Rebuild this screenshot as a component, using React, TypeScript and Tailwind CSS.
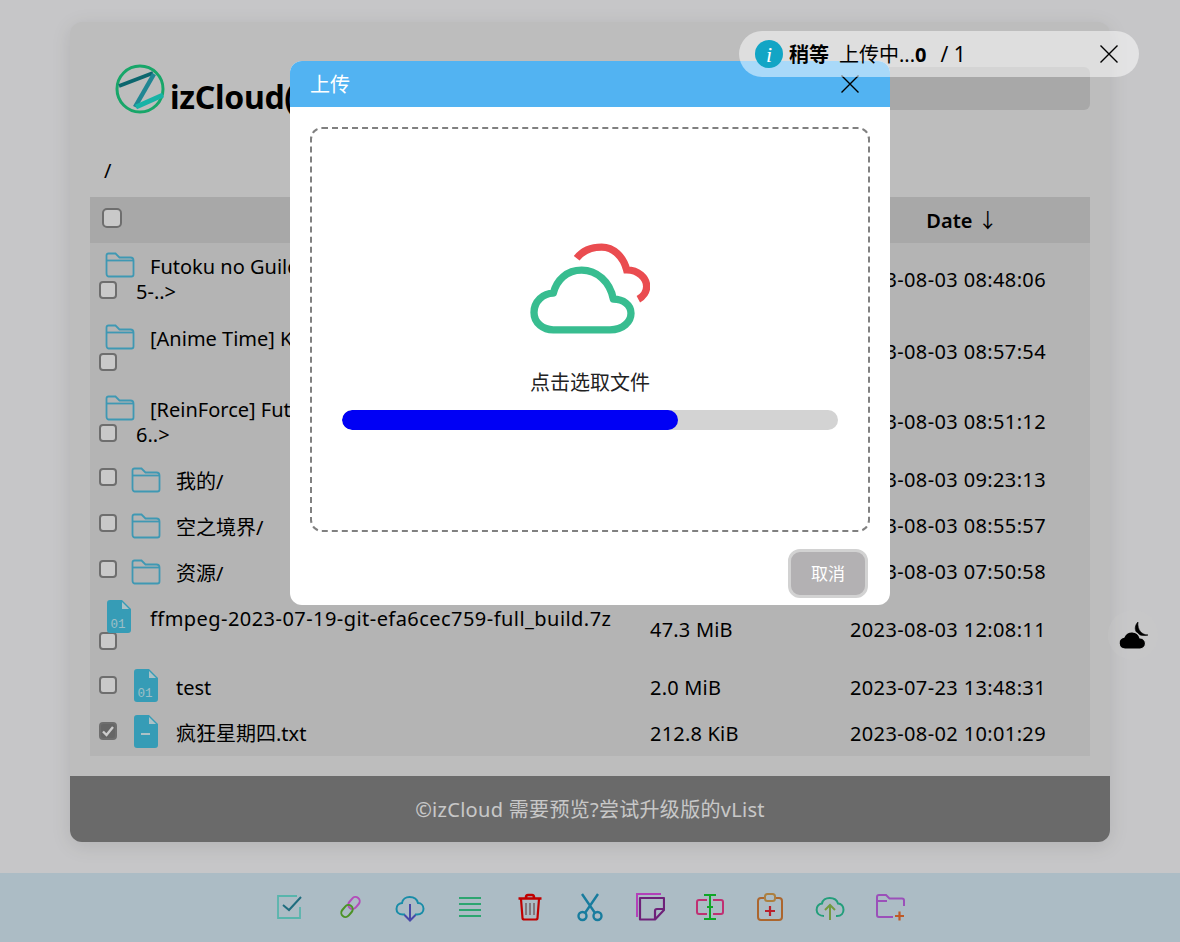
const font = "font-['Noto_Sans','Noto_Sans_CJK_SC',sans-serif]";

function Check({ big, checked, className = "" }: { big?: boolean; checked?: boolean; className?: string }) {
  return (
    <span
      className={`flex shrink-0 items-center justify-center border-2 ${big ? "h-[20px] w-[20px] rounded-[5px]" : "h-[18px] w-[18px] rounded-[4px]"} ${
        checked ? "border-[#8a8a8a] bg-[#808080]" : "border-[#8a8a8a] bg-[#fcfcfc]"
      } ${className}`}
    >
      {checked && (
        <svg width="14" height="14" viewBox="0 0 14 14" fill="none">
          <path d="M2 7.5 5.5 11 12 3" stroke="#fff" strokeWidth="2.4" />
        </svg>
      )}
    </span>
  );
}

function Folder() {
  return (
    <svg width="30" height="26" viewBox="0 0 30 26" fill="none" stroke="#4fbfe0" strokeWidth="1.8" className="shrink-0">
      <path d="M1.5 21V3.5q0-2 2-2h7l4 4h11q3 0 3 3v14q0 2-2 2h-23q-2 0-2-3.500Z" />
      <path d="M1.500 8.500h27" />
    </svg>
  );
}

function FileIcon({ kind, className = "" }: { kind: "bin" | "txt"; className?: string }) {
  return (
    <svg width="24" height="33" viewBox="0 0 24 33" className={`shrink-0 ${className}`}>
      <path d="M3 0h12l9 9v21q0 3-3 3H3q-3 0-3-3V3q0-3 3-3Z" fill="#44c4e4" />
      <path d="M15 2l7 7h-7Z" fill="#d8f2f8" />
      {kind === "bin" ? (
        <text x="3.500" y="27.500" fontSize="12.500" fontFamily="Liberation Mono" fill="#c4eef8">
          01
        </text>
      ) : (
        <path d="M7 19h9" stroke="#d8f2f8" strokeWidth="2" />
      )}
    </svg>
  );
}

const rows = [
  { kind: "tall", name: "Futoku no Guild [01-1", rest: "5-..>", date: "2023-08-03 08:48:06", cls: "h-[72px] pt-[9px]" },
  { kind: "tall", name: "[Anime Time] Kanojo", rest: "", date: "2023-08-03 08:57:54", cls: "h-[72px] pt-[9px]" },
  { kind: "tall", name: "[ReinForce] Futoku", rest: "6..>", date: "2023-08-03 08:51:12", cls: "h-[70px] pt-[8px]" },
  { kind: "dir", name: "我的/", date: "2023-08-03 09:23:13" },
  { kind: "dir", name: "空之境界/", date: "2023-08-03 08:55:57" },
  { kind: "dir", name: "资源/", date: "2023-08-03 07:50:58" },
];

function Toolbar() {
  return (
    <div className="mt-[31px] flex h-[69px] items-center justify-center gap-[30px] bg-[#d8ecf7] pb-[1px]">
      {/* select */}
      <svg width="30" height="30" viewBox="0 0 30 30" fill="none">
        <path d="M25 15v11H3V4h19" stroke="#6fe3d8" strokeWidth="1.8" />
        <path d="M8 13l6 5 12-13" stroke="#27899f" strokeWidth="2" />
      </svg>
      {/* link */}
      <svg width="30" height="30" viewBox="0 0 30 30" fill="none" strokeWidth="2">
        <rect x="14.750" y="4.500" width="8.500" height="13" rx="4.250" transform="rotate(40 19 11)" stroke="#e060e8" />
        <rect x="7.750" y="12.500" width="8.500" height="13" rx="4.250" transform="rotate(40 12 19)" stroke="#60b830" />
      </svg>
      {/* download */}
      <svg width="30" height="30" viewBox="0 0 30 30" fill="none" strokeWidth="2">
        <path d="M8 22.500c-9 0-8-11-1-11.500C8 3 21 3 23 11c7 0 8 11.500-1 11.500h-2M8 22.500h2" stroke="#1fb0d2" />
        <path d="M15 12v16M9.500 23l5.500 5.500 5.500-5.500" stroke="#5a5ad2" />
      </svg>
      {/* list */}
      <svg width="30" height="30" viewBox="0 0 30 30" fill="none" stroke="#39cf8c" strokeWidth="1.9">
        <path d="M4 6h22M4 12h22M4 18h22M4 24h22" />
      </svg>
      {/* delete */}
      <svg width="30" height="30" viewBox="0 0 30 30" fill="none">
        <path d="M3.500 6.500h23M11 5.500q0-2.500 2-2.500h4q2 0 2 2.500" stroke="#f00000" strokeWidth="2.600" />
        <path d="M6 7l1.500 19q0 1.500 2 1.500h11q2 0 2-1.500L24 7" stroke="#f00000" strokeWidth="2.200" />
        <path d="M11 11v12M15 11v12M19 11v12" stroke="#a08a90" strokeWidth="1.800" />
      </svg>
      {/* cut */}
      <svg width="30" height="30" viewBox="0 0 30 30" fill="none" stroke="#1f9cc6" strokeWidth="2.400">
        <circle cx="7.500" cy="24" r="4" />
        <circle cx="22.500" cy="24" r="4" />
        <path d="M10 21 23 2M20 21 7 2" />
      </svg>
      {/* copy */}
      <svg width="30" height="30" viewBox="0 0 30 30" fill="none">
        <path d="M2 25V2h24" stroke="#e050e8" strokeWidth="2" />
        <path d="M5 27.500V6h24v12l-9 9.500Z" stroke="#8a2a98" strokeWidth="2.200" strokeLinejoin="round" />
        <path d="M29 17h-7q-2 0-2 2v8.500" stroke="#8a2a98" strokeWidth="2.200" />
      </svg>
      {/* rename */}
      <svg width="30" height="30" viewBox="0 0 30 30" fill="none">
        <path d="M12 8H4q-2 0-2 2v10q0 2 2 2h8M18 8h8q2 0 2 2v10q0 2-2 2h-8" stroke="#f03c90" strokeWidth="2" />
        <path d="M9 3h12M9 27h12M15 3v24M12 15h6" stroke="#12d030" strokeWidth="2" />
      </svg>
      {/* paste */}
      <svg width="30" height="30" viewBox="0 0 30 30" fill="none">
        <path d="M9 6H6q-3 0-3 3v16q0 3 3 3h18q3 0 3-3V9q0-3-3-3h-3" stroke="#d8803a" strokeWidth="2" />
        <rect x="10" y="2" width="10" height="7" rx="2.500" stroke="#d8a050" strokeWidth="2" />
        <path d="M10 19h10M15 14v10" stroke="#e82838" strokeWidth="2.200" />
      </svg>
      {/* upload */}
      <svg width="30" height="30" viewBox="0 0 30 30" fill="none" strokeWidth="2">
        <path d="M9 24c-10 0-9-12-2-12.500C8 4 21 4 23 11.500c7 0 8 12.500-1 12.500h-1" stroke="#2cc69a" />
        <path d="M15 28V13M10 18l5-5 5 5" stroke="#90c050" />
      </svg>
      {/* new folder */}
      <svg width="30" height="30" viewBox="0 0 30 30" fill="none">
        <path d="M18 25H4q-2 0-2-2V5q0-2 2-2h7l3.500 3.500H27q2 0 2 2V14M2 9h10" stroke="#c264e8" strokeWidth="2" />
        <path d="M20 24h9M24.500 19.500v9" stroke="#ee7030" strokeWidth="2.200" />
      </svg>
    </div>
  );
}

function Upload() {
  return (
    <div className="absolute left-[290px] top-[61px] z-20 h-[544px] w-[600px] overflow-hidden rounded-xl bg-white">
      <div className="flex h-[46px] items-center justify-between bg-[#52b3f2] pl-[20px] pr-[30px] text-[20px] text-white">
        <span className="pt-[1px]">上传</span>
        <svg width="20" height="20" viewBox="0 0 20 20" stroke="#000" strokeWidth="1.400">
          <path d="M1.500 1.500l17 17M18.500 1.500l-17 17" />
        </svg>
      </div>
      <div className="px-[20px] pt-[20px]">
        <div className="flex h-[405px] flex-col items-center rounded-xl border-2 border-dashed border-[#808080] px-[30px] pt-[114px]">
          <svg width="120" height="92" viewBox="60 40 360 275" fill="none">
            <path d="M200 85C220 60 250 52 275 52C310 52 340 80 350 120C385 120 410 145 410 170C410 185 400 200 385 208" stroke="#ea4c50" strokeWidth="22" />
            <path d="M130 300H300C340 300 363 275 363 250C363 225 340 208 310 208C300 155 260 121 215 121C170 121 140 150 130 190C100 190 72 215 72 248C72 280 100 300 130 300Z" stroke="#38bd90" strokeWidth="22" strokeLinejoin="round" />
          </svg>
          <div className="mt-[34px] text-[20px] leading-[28px] text-[#222]">点击选取文件</div>
          <div className="mt-[13px] h-[20px] w-full overflow-hidden rounded-full bg-[#d3d3d3]">
            <div className="h-full w-[336px] rounded-full bg-[#0000f5]" />
          </div>
        </div>
        <div className="mt-[17px] flex justify-end pr-[2px]">
          <button className="flex h-[49px] w-[80px] items-center justify-center rounded-xl border-[3px] border-[#d2d2d2] bg-[#b3b1b3] text-[17px] text-white">
            取消
          </button>
        </div>
      </div>
    </div>
  );
}

export default function App() {
  return (
    <div className={`relative h-[942px] w-[1180px] overflow-hidden bg-[#f8f8fa] text-black ${font}`}>
      {/* page */}
      <div className="mx-[70px] mt-[22px] flex h-[820px] flex-col overflow-hidden rounded-xl bg-[#ededed] shadow-[0_4px_20px_rgba(0,0,0,0.1)]">
        <div className="flex h-[175px] flex-col px-[20px]">
          <div className="mt-[45px] flex h-[43px] items-center justify-between">
            <div className="ml-[25px] flex items-center gap-[5px] whitespace-nowrap text-[32px] font-bold">
              <svg width="50" height="50" viewBox="0 0 50 50" fill="none" className="shrink-0">
                <circle cx="25" cy="25" r="23" stroke="#1ed084" strokeWidth="3" />
                <path d="M4 22 38 9" stroke="#10808a" strokeWidth="4" />
                <path d="M39 10 20 43" stroke="#28a8b8" strokeWidth="4.500" />
                <path d="M21 43 48 31" stroke="#1fe0d0" strokeWidth="5" />
              </svg>
              <span className="pt-[16px] leading-[32px] tracking-[-0.3px]">izCloud(</span>
            </div>
            <div className="h-[43px] w-[500px] rounded-md bg-[#d3d3d3]" />
          </div>
          <div className="ml-[14px] mt-[47px] text-[20px] leading-[28px]">/</div>
        </div>
        <div className="mx-[20px] bg-[#e2e2e2] text-[20px]">
          <div className="flex h-[46px] items-center bg-[#d3d3d3] pl-[12px]">
            <div className="w-[548px]">
              <Check big className="mb-[4px]" />
            </div>
            <div className="w-[200px]" />
            <div className="w-[240px] pr-[16px] pt-[2px] text-center font-semibold">
              Date <span className="font-normal">↓</span>
            </div>
          </div>
          {rows.map((r) =>
            r.kind === "tall" ? (
              <div key={r.name} className={`flex ${r.cls}`}>
                <div className="w-[560px]">
                  <div className="flex h-[26px] items-center gap-[15px] pl-[15px] whitespace-nowrap">
                    <Folder />
                    <span className="pt-[4px]">{r.name}</span>
                  </div>
                  <div className="flex h-[26px] items-center gap-[19px] pl-[9px]">
                    <Check className="mb-[2px]" />
                    <span className="pt-[2px]">{r.rest}</span>
                  </div>
                </div>
                <div className="w-[200px]" />
                <div className="flex items-center self-stretch pb-[8px] tracking-[0.37px] whitespace-nowrap">{r.date}</div>
              </div>
            ) : (
              <div key={r.name} className="flex h-[46px] items-center">
                <div className="flex w-[560px] items-center gap-[14px] pl-[9px]">
                  <Check className="mb-[6px]" />
                  <Folder />
                  <span className="ml-[1px] pt-[3px]">{r.name}</span>
                </div>
                <div className="w-[200px]" />
                <div className="tracking-[0.37px] whitespace-nowrap">{r.date}</div>
              </div>
            ),
          )}
          <div className="flex h-[70px] pt-[5px]">
            <div className="w-[560px]">
              <div className="flex h-[33px] items-start gap-[19px] pl-[17px] whitespace-nowrap">
                <FileIcon kind="bin" />
                <span className="pt-[4px] tracking-[0.45px]">ffmpeg-2023-07-19-git-efa6cec759-full_build.7z</span>
              </div>
              <div className="pl-[9px]">
                <Check className="-mt-[1px]" />
              </div>
            </div>
            <div className="flex w-[200px] items-center pb-[5px] tracking-[0.2px]">47.3 MiB</div>
            <div className="flex items-center pb-[5px] tracking-[0.37px] whitespace-nowrap">2023-08-03 12:08:11</div>
          </div>
          <div className="flex h-[46px] items-center">
            <div className="flex w-[560px] items-center gap-[17px] pl-[9px]">
              <Check className="mb-[6px]" />
              <FileIcon kind="bin" className="mb-[6px]" />
              <span className="ml-[1px]">test</span>
            </div>
            <div className="w-[200px] tracking-[0.2px]">2.0 MiB</div>
            <div className="tracking-[0.37px] whitespace-nowrap">2023-07-23 13:48:31</div>
          </div>
          <div className="flex h-[45px] items-center">
            <div className="flex w-[560px] items-center gap-[17px] pl-[9px]">
              <Check checked className="mb-[6px]" />
              <FileIcon kind="txt" className="mb-[4px]" />
              <span className="ml-[1px]">疯狂星期四.txt</span>
            </div>
            <div className="w-[200px] tracking-[0.2px]">212.8 KiB</div>
            <div className="tracking-[0.37px] whitespace-nowrap">2023-08-02 10:01:29</div>
          </div>
        </div>
        <div className="mt-auto flex h-[66px] items-center justify-center bg-[#858585] pt-[2px] text-[20px] tracking-[0.3px] text-[#fafafa]">
          ©izCloud 需要预览?尝试升级版的vList
        </div>
      </div>

      <Toolbar />

      {/* theme switch */}
      <div className="absolute left-[1108px] top-[610px] flex h-[50px] w-[50px] items-center justify-center rounded-full bg-[#fdfdfd]/30">
        <svg width="30" height="30" viewBox="0 0 30 30">
          <path d="M20 2C14 8 18 18 30 15C24 15 19 10 20 2Z" fill="#000" stroke="#000" strokeWidth="0.6" />
          <path d="M7 29a6 6 0 0 1-1-11.900A8.500 8.500 0 0 1 22 18a5.500 5.500 0 0 1 0 11Z" fill="#000" stroke="#fafafa" strokeWidth="1.200" />
        </svg>
      </div>

      {/* modal backdrop */}
      <div className="absolute inset-0 z-10 bg-black/20" />
      <Upload />

      {/* toast */}
      <div className="absolute left-[739px] top-[31px] z-30 flex h-[46px] w-[400px] items-center rounded-full bg-white/50 pl-[16px] pr-[20px] text-[20px]">
        <span className="flex h-[28px] w-[28px] items-center justify-center rounded-full bg-[#12a5c5] font-['Liberation_Serif',serif] text-[22px] italic text-white">
          i
        </span>
        <span className="ml-[6px] pt-[1px] font-bold">稍等</span>
        <span className="ml-[10px] pt-[1px]">
          上传中...<b>0</b>
        </span>
        <span className="ml-[14px] pt-[1px] text-[21px]">/ 1</span>
        <svg width="20" height="20" viewBox="0 0 20 20" stroke="#000" strokeWidth="1.400" className="ml-auto">
          <path d="M1.500 1.500l17 17M18.500 1.500l-17 17" />
        </svg>
      </div>
    </div>
  );
}
